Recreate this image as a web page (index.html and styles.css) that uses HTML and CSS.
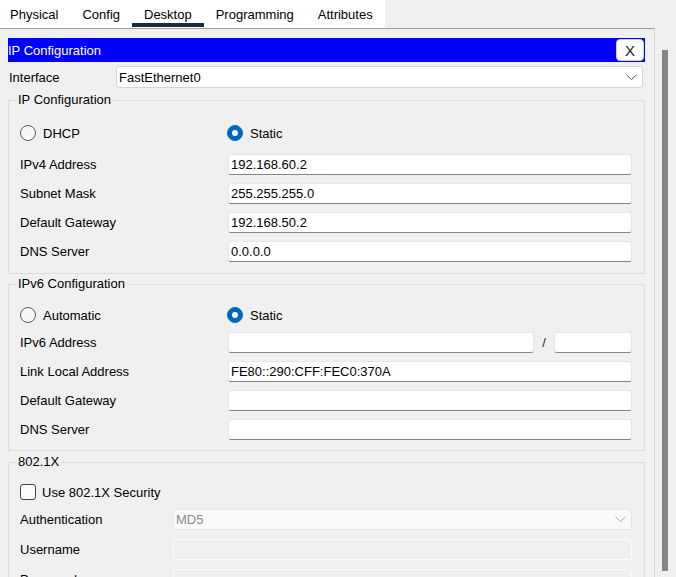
FILE: index.html
```html
<!DOCTYPE html>
<html lang="en">
<head>
<meta charset="utf-8">
<title>IP Configuration</title>
<link rel="stylesheet" href="styles.css">
</head>
<body>
<div class="tabs">
  <div class="tab first">Physical</div>
  <div class="tab">Config</div>
  <div class="tab active">Desktop</div>
  <div class="tab">Programming</div>
  <div class="tab">Attributes</div>
</div>
<div class="main">
  <div class="panel">
    <div class="titlebar">
      <span>IP Configuration</span>
      <button class="close">X</button>
    </div>
    <div class="iface">
      <span class="iface-lbl">Interface</span>
      <div class="select">
        <span>FastEthernet0</span>
        <svg class="chev" width="11" height="7" viewBox="0 0 11 7"><path d="M0.5 0.8 L5.5 5.6 L10.5 0.8" fill="none" stroke="#555" stroke-width="1"/></svg>
      </div>
    </div>

    <fieldset class="group g-ip">
      <legend>IP Configuration</legend>
      <div class="radios r-ip">
        <div class="radio"><span class="dot"></span>DHCP</div>
        <div class="radio"><span class="dot on"></span>Static</div>
      </div>
      <div class="form">
        <span class="lbl">IPv4 Address</span><div class="input">192.168.60.2</div>
        <span class="lbl">Subnet Mask</span><div class="input">255.255.255.0</div>
        <span class="lbl">Default Gateway</span><div class="input">192.168.50.2</div>
        <span class="lbl">DNS Server</span><div class="input">0.0.0.0</div>
      </div>
    </fieldset>

    <fieldset class="group g-v6">
      <legend>IPv6 Configuration</legend>
      <div class="radios r-v6">
        <div class="radio"><span class="dot"></span>Automatic</div>
        <div class="radio"><span class="dot on"></span>Static</div>
      </div>
      <div class="form">
        <span class="lbl">IPv6 Address</span>
        <div class="pair">
          <div class="input grow"></div>
          <span class="slash">/</span>
          <div class="input prefix"></div>
        </div>
        <span class="lbl">Link Local Address</span><div class="input">FE80::290:CFF:FEC0:370A</div>
        <span class="lbl">Default Gateway</span><div class="input"></div>
        <span class="lbl">DNS Server</span><div class="input"></div>
      </div>
    </fieldset>

    <fieldset class="group g-8021x">
      <legend>802.1X</legend>
      <div class="check-row">
        <span class="box"></span>Use 802.1X Security
      </div>
      <div class="form form-x">
        <span class="lbl">Authentication</span>
        <div class="select disabled">
          <span>MD5</span>
          <svg class="chev" width="11" height="7" viewBox="0 0 11 7"><path d="M0.5 0.8 L5.5 5.6 L10.5 0.8" fill="none" stroke="#a8a8a8" stroke-width="1"/></svg>
        </div>
        <span class="lbl">Username</span><div class="input off"></div>
        <span class="lbl">Password</span><div class="input off"></div>
      </div>
    </fieldset>
  </div>
  <div class="scroll"><div class="thumb"></div></div>
</div>
</body>
</html>
```
FILE: styles.css
```css
* { box-sizing: border-box; }
html, body { margin: 0; height: 100%; overflow: hidden; }
body {
  background: #f0f0f0;
  font-family: "Liberation Sans", Arial, sans-serif;
  font-size: 13px;
  color: #000;
}

.tabs {
  display: flex;
  width: 385px;
  height: 28px;
  background: #fff;
}
.tab {
  height: 27px;
  padding: 7px 12px 0;
  line-height: 16px;
  border-bottom: 4px solid transparent;
  white-space: nowrap;
}
.tab.first { padding-left: 10px; }
.tab.active { border-bottom-color: #1b2a3f; }

.main {
  display: grid;
  grid-template-columns: 655px 1fr;
}
.panel {
  height: 549px;
  border-top: 1px solid #a0a0a0;
  border-right: 1px solid #d9d9d9;
  padding: 9px 9px 0 8px;
}
.scroll { padding: 22px 0 0 7px; }
.thumb { width: 6px; height: 521px; background: #868686; }

.titlebar {
  height: 24px;
  background: #0000ff;
  color: #fff;
  display: flex;
  align-items: center;
  justify-content: space-between;
}
.close {
  width: 28px;
  height: 22px;
  margin-right: 1px;
  padding: 0;
  background: #fff;
  border: 1px solid #cfcfcf;
  border-radius: 4px;
  font: 15px "Liberation Sans", Arial, sans-serif;
  color: #222;
}

.iface {
  display: flex;
  align-items: center;
  height: 22px;
  margin-top: 4px;
}
.iface-lbl { width: 108px; padding-left: 1px; }
.select {
  flex: 1;
  height: 22px;
  margin-right: 2px;
  background: #fff;
  border: 1px solid #d3d3d3;
  border-radius: 3px;
  display: flex;
  align-items: center;
  justify-content: space-between;
  padding: 0 5px 0 2px;
}
.select.disabled {
  height: 21px;
  margin-right: 0;
  background: #fafafa;
  border-color: #e6e6e6;
  color: #8a8a8a;
  padding-right: 5px;
}

.group {
  margin: 4px 0 0;
  padding: 14px 12px 11px 11px;
  border: 1px solid #dcdcdc;
  min-width: 0;
}
.group legend {
  padding: 0 2px;
  margin-left: -4px;
  line-height: 16px;
}
.g-v6 { margin-top: 2px; padding-top: 12px; padding-bottom: 10px; }
.g-8021x { margin-top: 3px; padding-top: 11px; }

.radios {
  display: grid;
  grid-template-columns: 207px 1fr;
  height: 22px;
  align-items: center;
}
.r-ip { margin-bottom: 10px; }
.r-v6 { margin-bottom: 6px; }
.radio { display: flex; align-items: center; gap: 7px; }
.dot {
  width: 16px;
  height: 16px;
  border-radius: 50%;
  border: 1px solid #5a5a5a;
  background: #f7f7f7;
}
.dot.on {
  background: #0067c0;
  border-color: #0067c0;
  display: grid;
  place-items: center;
}
.dot.on::after {
  content: "";
  width: 6px;
  height: 6px;
  border-radius: 50%;
  background: #fff;
}

.form {
  display: grid;
  grid-template-columns: 208px 1fr;
  grid-auto-rows: 21px;
  row-gap: 8px;
  align-items: center;
}
.form-x {
  grid-template-columns: 153px 1fr;
  row-gap: 9px;
}
.input {
  height: 21px;
  background: #fff;
  border: 1px solid #e6e6e6;
  border-bottom-color: #858585;
  border-radius: 3px;
  padding: 0 2px;
  line-height: 19px;
  white-space: nowrap;
}
.input.off {
  background: #f0f0f0;
  border-color: #fcfcfc;
}
.pair { display: flex; align-items: center; }
.pair .grow { flex: 1; }
.slash { width: 20px; text-align: center; color: #222; }
.pair .prefix { width: 78px; }

.check-row {
  display: flex;
  align-items: center;
  gap: 6px;
  height: 22px;
  margin-bottom: 6px;
}
.box {
  width: 16px;
  height: 16px;
  border: 1px solid #444;
  border-radius: 3px;
  background: #fbfbfb;
}
```
